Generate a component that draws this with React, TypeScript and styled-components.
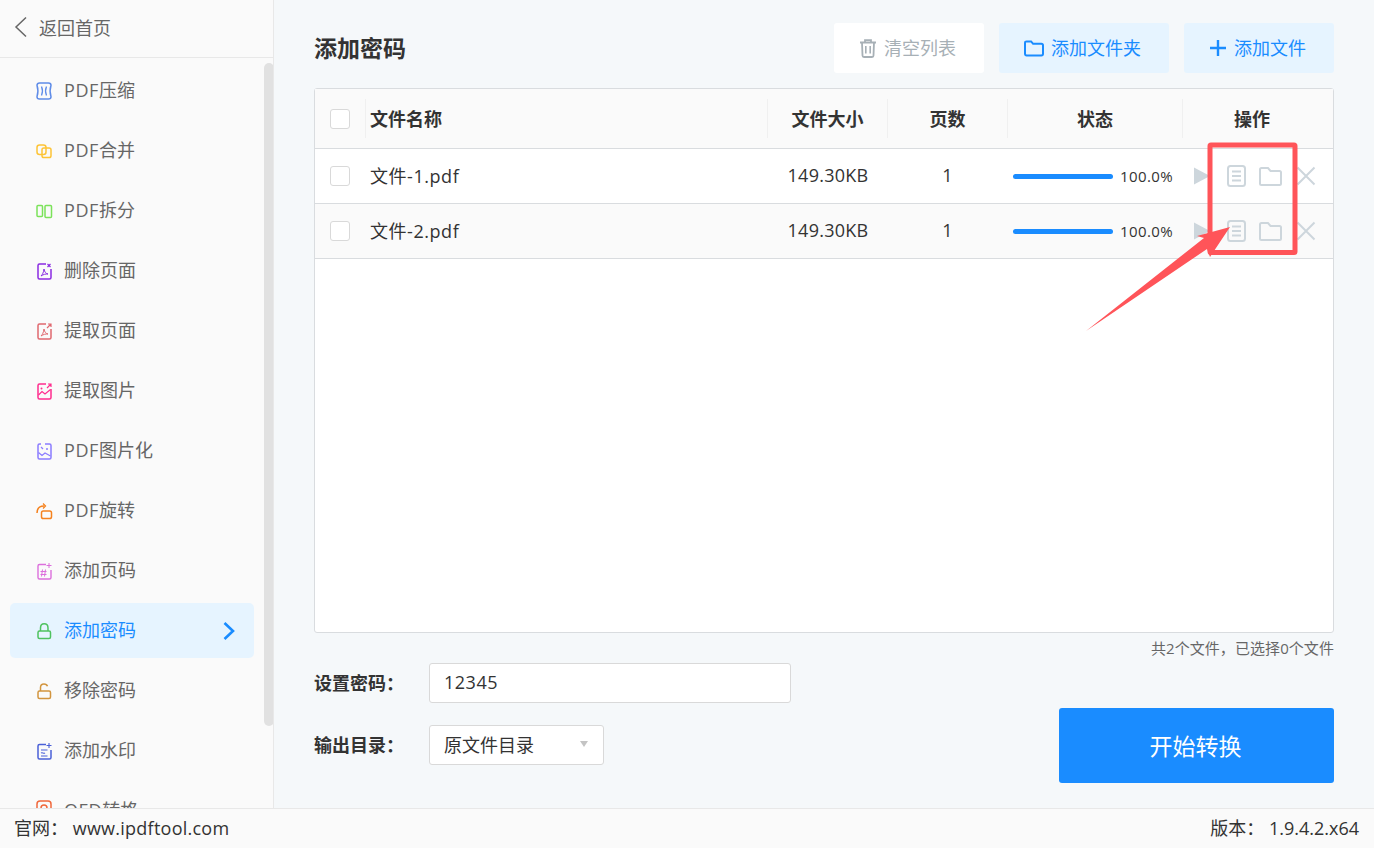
import React from "react";
import styled, { createGlobalStyle } from "styled-components";

const Global = createGlobalStyle`
  html, body { margin: 0; padding: 0; height: 100%; }
  body { font-family: "Open Sans", "Noto Sans CJK SC", sans-serif; color: #333; overflow: hidden; }
  * { box-sizing: border-box; }
`;

const Page = styled.div`
  position: relative;
  width: 1374px;
  height: 848px;
  display: flex;
  flex-direction: column;
  background: #f5f8fa;
  overflow: hidden;
`;
const Body = styled.div`
  flex: 1;
  min-height: 0;
  display: flex;
`;
const Sidebar = styled.aside`
  position: relative;
  width: 274px;
  flex: none;
  display: flex;
  flex-direction: column;
  background: #fafafa;
  border-right: 1px solid #e8e8e8;
  overflow: hidden;
`;
const BackRow = styled.div`
  height: 58px;
  flex: none;
  display: flex;
  align-items: center;
  gap: 12px;
  padding: 0 0 3px 14px;
  border-bottom: 1px solid #e8e8e8;
  color: #666;
  font-size: 18px;
`;
const NavList = styled.nav`
  flex: 1;
  min-height: 0;
  overflow: hidden;
  display: flex;
  flex-direction: column;
  gap: 5px;
  padding: 5px 19px 0 10px;
`;
const NavItem = styled.div<{ $active?: boolean }>`
  height: 55px;
  flex: none;
  display: flex;
  align-items: center;
  gap: 12px;
  padding: 0 18px 0 26px;
  border-radius: 5px;
  font-size: 18px;
  color: ${(p) => (p.$active ? "#1a8cff" : "#666")};
  background: ${(p) => (p.$active ? "#e6f4ff" : "transparent")};
`;
const NavLabel = styled.span`
  flex: 1;
  padding-bottom: 4px;
`;
const LatinPart = styled.span`
  letter-spacing: 0.6px;
`;
const NavIcon = styled.svg`
  width: 16px;
  height: 18px;
  flex: none;
  overflow: visible;
`;
const ScrollThumb = styled.div`
  position: absolute;
  left: 264px;
  top: 63px;
  width: 10px;
  height: 663px;
  border-radius: 5px;
  background: #e1e1e1;
`;
const Main = styled.main`
  flex: 1;
  min-width: 0;
  display: flex;
  flex-direction: column;
  padding: 23px 40px 25px;
`;
const TopBar = styled.div`
  height: 50px;
  flex: none;
  display: flex;
  align-items: center;
  gap: 15px;
  margin-bottom: 15px;
`;
const Title = styled.h1`
  flex: 1;
  margin: 0;
  padding-bottom: 2px;
  font-size: 23px;
  font-weight: 700;
  color: #333;
`;
const ToolButton = styled.button<{ $w: number; $muted?: boolean }>`
  width: ${(p) => p.$w}px;
  height: 50px;
  display: flex;
  align-items: center;
  justify-content: center;
  gap: 7px;
  padding: 0 3px 0 0;
  border: 0;
  border-radius: 3px;
  font: inherit;
  font-size: 18px;
  background: ${(p) => (p.$muted ? "#fff" : "#e6f4ff")};
  color: ${(p) => (p.$muted ? "#a7b0b6" : "#1a8cff")};
`;
const ButtonText = styled.span`
  padding-bottom: 2px;
`;
const Table = styled.div`
  flex: 1;
  min-height: 0;
  background: #fff;
  border: 1px solid #d9dcdf;
  border-radius: 3px;
`;
const cols = "50px 402px 120px 120px 175px 1fr";
const HeadRow = styled.div`
  height: 60px;
  display: grid;
  grid-template-columns: ${cols};
  background: #fafafa;
  border-bottom: 1px solid #d9dcdf;
  font-size: 18px;
  font-weight: 700;
  color: #333;
`;
const HeadCell = styled.div<{ $left?: boolean; $sep?: boolean; $endGap?: number }>`
  display: flex;
  align-items: center;
  justify-content: ${(p) => (p.$left ? "flex-start" : "center")};
  padding: 0 ${(p) => p.$endGap ?? 0}px 2px ${(p) => (p.$left ? "4px" : "0")};
  border-left: ${(p) => (p.$sep ? "1px solid #f0f0f0" : "0")};
  margin: 10px 0;
`;
const CheckCell = styled.div`
  display: flex;
  align-items: center;
  justify-content: center;
`;
const Row = styled.div<{ $alt?: boolean }>`
  height: 55px;
  display: grid;
  grid-template-columns: ${cols};
  background: ${(p) => (p.$alt ? "#fafafa" : "#fff")};
  border-bottom: 1px solid #d9dcdf;
  font-size: 18px;
  color: #333;
`;
const Cell = styled.div<{ $left?: boolean; $track?: number; $inset?: number }>`
  display: flex;
  align-items: center;
  justify-content: ${(p) => (p.$left ? "flex-start" : "center")};
  padding: 0 0 2px ${(p) => (p.$left ? 5 : p.$inset ?? 0)}px;
  letter-spacing: ${(p) => p.$track ?? 0}px;
`;
const Check = styled.span`
  width: 20px;
  height: 20px;
  background: #fff;
  border: 1px solid #d9d9d9;
  border-radius: 3px;
`;
const StatusCell = styled.div`
  display: flex;
  align-items: center;
  gap: 7px;
  padding-left: 6px;
  font-size: 15px;
  letter-spacing: 0.4px;
  white-space: nowrap;
`;
const Bar = styled.span`
  width: 100px;
  height: 5px;
  border-radius: 3px;
  background: #1a8cff;
`;
const Ops = styled.div`
  display: grid;
  grid-template-columns: repeat(4, 34.5px);
  align-items: center;
  justify-items: center;
  padding-left: 3px;
`;
const OpIcon = styled.svg`
  display: block;
  height: 22px;
  width: 24px;
`;
const Note = styled.div`
  height: 30px;
  flex: none;
  display: flex;
  align-items: center;
  justify-content: flex-end;
  padding-bottom: 2px;
  font-size: 15px;
  letter-spacing: 0.07px;
  color: #666;
`;
const Bottom = styled.div`
  height: 120px;
  flex: none;
  display: flex;
  justify-content: space-between;
  align-items: flex-end;
`;
const Form = styled.div`
  align-self: flex-start;
  display: flex;
  flex-direction: column;
  gap: 22px;
`;
const Field = styled.div`
  display: flex;
  align-items: center;
  height: 40px;
`;
const Label = styled.label`
  width: 115px;
  padding-bottom: 2px;
  font-size: 18px;
  font-weight: 700;
  color: #333;
`;
const TextBox = styled.div`
  width: 362px;
  height: 40px;
  display: flex;
  align-items: center;
  padding: 0 0 2px 14px;
  background: #fff;
  border: 1px solid #d9d9d9;
  border-radius: 3px;
  font-size: 18px;
  letter-spacing: 0.5px;
  color: #333;
`;
const SelectBox = styled(TextBox)`
  width: 175px;
  justify-content: space-between;
  padding: 0 15px 2px 14px;
  letter-spacing: 0;
`;
const Caret = styled.span`
  width: 0;
  height: 0;
  border-left: 4.5px solid transparent;
  border-right: 4.5px solid transparent;
  border-top: 6px solid #c4c4c4;
`;
const StartButton = styled.button`
  width: 275px;
  height: 75px;
  padding: 0 2px 2px 0;
  border: 0;
  border-radius: 3px;
  background: #1a8cff;
  color: #fff;
  font: inherit;
  font-size: 23px;
`;
const Footer = styled.footer`
  height: 40px;
  flex: none;
  display: flex;
  justify-content: space-between;
  align-items: center;
  padding: 0 15px 3px 14px;
  background: #fafafa;
  border-top: 1px solid #e8e8e8;
  font-size: 18px;
  color: #333;
`;
const Url = styled.span`
  letter-spacing: 0.25px;
`;
const Overlay = styled.svg`
  position: absolute;
  left: 0;
  top: 0;
  width: 1374px;
  height: 848px;
  pointer-events: none;
`;

const pdfMark = (c: string) => (
  <path d="M5 14c1.5-1.5 2.5-3.5 3-7 .4 3 2 4.6 4 5-2.400-.2-4.600.4-7 2z" fill="none" stroke={c} strokeWidth="1" />
);

type Nav = { label: string; color: string; draw: (c: string) => React.ReactNode };
const navItems: Nav[] = [
  {
    label: "PDF压缩",
    color: "#5f8ce8",
    draw: (c) => (
      <>
        <path d="M3.500 1h9c1.500 0 2.500.8 2.500 2.300-1.200 3.700-1.200 7.700 0 11.400 0 1.500-1 2.300-2.500 2.300h-9C2 17 1 16.200 1 14.700c1.200-3.700 1.200-7.700 0-11.400C1 1.800 2 1 3.500 1z" fill="none" stroke={c} strokeWidth="1.500" />
        <path d="M5.500 4.500c1.300 3 1.300 6 0 9M10.500 4.500c-1.300 3-1.300 6 0 9" fill="none" stroke={c} strokeWidth="1.300" />
      </>
    ),
  },
  {
    label: "PDF合并",
    color: "#fdc437",
    draw: (c) => (
      <>
        <rect x="1" y="3" width="9" height="9.500" rx="2.500" fill="none" stroke={c} strokeWidth="1.500" />
        <rect x="6" y="6" width="9" height="9.500" rx="1.800" fill="none" stroke={c} strokeWidth="1.500" />
      </>
    ),
  },
  {
    label: "PDF拆分",
    color: "#7be25a",
    draw: (c) => (
      <>
        <rect x="1" y="3.500" width="5.500" height="11" rx="1" fill="none" stroke={c} strokeWidth="1.500" />
        <rect x="9" y="3.500" width="6.500" height="12" rx="1" fill="none" stroke={c} strokeWidth="1.500" />
      </>
    ),
  },
  {
    label: "删除页面",
    color: "#8a2be2",
    draw: (c) => (
      <>
        <path d="M10 2H3.500C2.500 2 2 2.500 2 3.500v12c0 1 .5 1.500 1.500 1.500h10c1 0 1.500-.5 1.500-1.500V7" fill="none" stroke={c} strokeWidth="1.500" />
        <path d="M11.500 2l3 3M14.500 2l-3 3" stroke={c} strokeWidth="1.200" />
        {pdfMark(c)}
      </>
    ),
  },
  {
    label: "提取页面",
    color: "#e0686f",
    draw: (c) => (
      <>
        <path d="M10 2H3.500C2.500 2 2 2.500 2 3.500v12c0 1 .5 1.500 1.500 1.500h10c1 0 1.500-.5 1.500-1.500V7" fill="none" stroke={c} strokeWidth="1.500" />
        <path d="M11 6l3.500-3.500M12 2h3v3" fill="none" stroke={c} strokeWidth="1.200" />
        {pdfMark(c)}
      </>
    ),
  },
  {
    label: "提取图片",
    color: "#ff2d8e",
    draw: (c) => (
      <>
        <path d="M10 2H3.500C2.500 2 2 2.500 2 3.500v12c0 1 .5 1.500 1.500 1.500h10c1 0 1.500-.5 1.500-1.500V7" fill="none" stroke={c} strokeWidth="1.500" />
        <path d="M11 6l3.500-3.500M12 2h3v3M2.500 13l3.500-3.500 3 2.500 5.500-4.500" fill="none" stroke={c} strokeWidth="1.200" />
        <circle cx="5.500" cy="6.500" r="1" fill={c} />
      </>
    ),
  },
  {
    label: "PDF图片化",
    color: "#8b7cff",
    draw: (c) => (
      <>
        <path d="M5 2H3.500C2.500 2 2 2.500 2 3.500v12c0 1 .5 1.500 1.500 1.500h10c1 0 1.500-.5 1.500-1.500v-12c0-1-.5-1.500-1.500-1.500H9" fill="none" stroke={c} strokeWidth="1.500" />
        <path d="M2.500 10.500l3.500 3 3-2.500 5.500 3" fill="none" stroke={c} strokeWidth="1.200" />
        <circle cx="11" cy="7" r="1" fill={c} />
        <path d="M5 5l2 2" stroke={c} strokeWidth="1.200" />
      </>
    ),
  },
  {
    label: "PDF旋转",
    color: "#f5821f",
    draw: (c) => (
      <>
        <rect x="5.500" y="9" width="10" height="7.500" rx="1.800" fill="none" stroke={c} strokeWidth="1.500" />
        <path d="M1 11c0-4.500 2.500-7 7-7" fill="none" stroke={c} strokeWidth="1.500" />
        <path d="M7 1.500l2.500 2.500-2.500 2.500" fill="none" stroke={c} strokeWidth="1.300" />
      </>
    ),
  },
  {
    label: "添加页码",
    color: "#dc6fdc",
    draw: (c) => (
      <>
        <path d="M10 2.500H3.500C2.500 2.500 2 3 2 4v11.500c0 1 .5 1.500 1.500 1.500h10c1 0 1.500-.5 1.500-1.500V8" fill="none" stroke={c} strokeWidth="1.400" />
        <path d="M13 1v5M10.500 3.500h5M6.500 7.500l-1 7M9.500 7.500l-1 7M4.500 9.500h6M4.500 12.500h6" fill="none" stroke={c} strokeWidth="1" />
      </>
    ),
  },
  {
    label: "添加密码",
    color: "#4fc25f",
    draw: (c) => (
      <>
        <rect x="2" y="9" width="12.500" height="7.500" rx="1.500" fill="none" stroke={c} strokeWidth="1.500" />
        <path d="M4.500 9V6C4.500 3.300 6 1.800 8.200 1.800S12 3.300 12 6v3" fill="none" stroke={c} strokeWidth="1.500" />
      </>
    ),
  },
  {
    label: "移除密码",
    color: "#d2953f",
    draw: (c) => (
      <>
        <rect x="2" y="9" width="12.500" height="7.500" rx="1.500" fill="none" stroke={c} strokeWidth="1.500" />
        <path d="M4.500 9V5.500C4.500 3.300 6 2 8 2c1.800 0 3 .8 3.500 2.300" fill="none" stroke={c} strokeWidth="1.500" />
      </>
    ),
  },
  {
    label: "添加水印",
    color: "#4a60d8",
    draw: (c) => (
      <>
        <path d="M10 2.500H3.500C2.500 2.500 2 3 2 4v11.500c0 1 .5 1.500 1.500 1.500h10c1 0 1.500-.5 1.500-1.500V8" fill="none" stroke={c} strokeWidth="1.500" />
        <path d="M13 1v5M10.500 3.500h5M5 8h6.500M5 11c1.500-1 2.500 1 4 0M5 14h6.500" fill="none" stroke={c} strokeWidth="1.100" />
      </>
    ),
  },
  {
    label: "OFD转格",
    color: "#f0683c",
    draw: (c) => (
      <>
        <rect x="1" y="-1" width="14" height="17" rx="3" fill="none" stroke={c} strokeWidth="1.500" />
        <circle cx="8" cy="6" r="3" fill="none" stroke={c} strokeWidth="1.500" />
      </>
    ),
  },
];

const OP = "#cdd6dc";

const PlayIcon = () => (
  <OpIcon viewBox="0 0 24 22">
    <path d="M4 2.500l16 8.500-16 8.500z" fill={OP} />
  </OpIcon>
);
const DocIcon = () => (
  <OpIcon viewBox="0 0 24 22">
    <rect x="3" y="1" width="17" height="20" rx="2.500" fill="none" stroke={OP} strokeWidth="2" />
    <path d="M7 6.500h9M7 11h9M7 15.500h9" stroke={OP} strokeWidth="2" />
  </OpIcon>
);
const FolderIcon = () => (
  <OpIcon viewBox="0 0 24 22">
    <path d="M1 4.500c0-1 .5-1.500 1.500-1.500H9l2.500 3h9c1 0 1.500.5 1.500 1.500v11c0 1-.5 1.500-1.500 1.500h-18c-1 0-1.500-.5-1.500-1.500z" fill="none" stroke={OP} strokeWidth="2" />
  </OpIcon>
);
const CloseIcon = () => (
  <OpIcon viewBox="0 0 24 22">
    <path d="M3.500 2.500l17 17M20.500 2.500l-17 17" fill="none" stroke={OP} strokeWidth="2" />
  </OpIcon>
);

const files = ["文件-1.pdf", "文件-2.pdf"];

const renderLabel = (label: string) => {
  const m = label.match(/^([A-Z]+)(.*)$/);
  if (!m) return label;
  return (
    <>
      <LatinPart>{m[1]}</LatinPart>
      {m[2]}
    </>
  );
};

export default function App() {
  return (
    <Page>
      <Global />
      <Body>
        <Sidebar>
          <BackRow>
            <svg width="13" height="22" viewBox="0 0 13 22">
              <path d="M12 1.500L2 11l10 9.500" fill="none" stroke="#666" strokeWidth="1.500" />
            </svg>
            返回首页
          </BackRow>
          <NavList>
            {navItems.map((n) => {
              const active = n.label === "添加密码";
              return (
                <NavItem key={n.label} $active={active}>
                  <NavIcon viewBox="0 0 16 18">{n.draw(n.color)}</NavIcon>
                  <NavLabel>{renderLabel(n.label)}</NavLabel>
                  {active && (
                    <svg width="14" height="20" viewBox="0 0 14 20">
                      <path d="M2.500 2l8.500 8-8.500 8" fill="none" stroke="#1a8cff" strokeWidth="2.600" />
                    </svg>
                  )}
                </NavItem>
              );
            })}
          </NavList>
          <ScrollThumb />
        </Sidebar>
        <Main>
          <TopBar>
            <Title>添加密码</Title>
            <ToolButton $w={150} $muted>
              <svg width="18" height="19" viewBox="0 0 18 19">
                <path d="M1 3.500h16M6 3V1.200h6V3M3 3.500l.5 13c0 1 .6 1.500 1.500 1.500h8c.9 0 1.500-.5 1.500-1.500l.5-13" fill="none" stroke="#a7b0b6" strokeWidth="1.800" />
                <path d="M6.800 7v7.500M11.200 7v7.500" stroke="#a7b0b6" strokeWidth="1.600" />
              </svg>
              <ButtonText>清空列表</ButtonText>
            </ToolButton>
            <ToolButton $w={170}>
              <svg width="20" height="17" viewBox="0 0 20 17">
                <path d="M1 3c0-1 .6-1.600 1.600-1.600h4.500l2 2.400h8.300c1 0 1.600.6 1.600 1.600v8.400c0 1-.6 1.600-1.600 1.600H2.600C1.600 15.400 1 14.800 1 13.800z" fill="none" stroke="#1a8cff" strokeWidth="2" />
              </svg>
              <ButtonText>添加文件夹</ButtonText>
            </ToolButton>
            <ToolButton $w={150}>
              <svg width="18" height="18" viewBox="0 0 18 18">
                <path d="M9 1v16M1 9h16" stroke="#1a8cff" strokeWidth="2.400" />
              </svg>
              <ButtonText>添加文件</ButtonText>
            </ToolButton>
          </TopBar>
          <Table>
            <HeadRow>
              <CheckCell>
                <Check />
              </CheckCell>
              <HeadCell $left $sep>文件名称</HeadCell>
              <HeadCell $sep>文件大小</HeadCell>
              <HeadCell $sep>页数</HeadCell>
              <HeadCell $sep>状态</HeadCell>
              <HeadCell $sep $endGap={12}>操作</HeadCell>
            </HeadRow>
            {files.map((f, i) => (
              <Row key={f} $alt={i === 1}>
                <CheckCell>
                  <Check />
                </CheckCell>
                <Cell $left $track={0.55}>{f}</Cell>
                <Cell $track={0.25} $inset={2}>149.30KB</Cell>
                <Cell $inset={1}>1</Cell>
                <StatusCell>
                  <Bar />
                  100.0%
                </StatusCell>
                <Ops>
                  <PlayIcon />
                  <DocIcon />
                  <FolderIcon />
                  <CloseIcon />
                </Ops>
              </Row>
            ))}
          </Table>
          <Note>共2个文件，已选择0个文件</Note>
          <Bottom>
            <Form>
              <Field>
                <Label>设置密码：</Label>
                <TextBox>12345</TextBox>
              </Field>
              <Field>
                <Label>输出目录：</Label>
                <SelectBox>
                  原文件目录
                  <Caret />
                </SelectBox>
              </Field>
            </Form>
            <StartButton>开始转换</StartButton>
          </Bottom>
        </Main>
      </Body>
      <Footer>
        <span>
          官网： <Url>www.ipdftool.com</Url>
        </span>
        <span>版本： 1.9.4.2.x64</span>
      </Footer>
      <Overlay viewBox="0 0 1374 848">
        <rect x="1210" y="145" width="85" height="107.500" rx="1" fill="none" stroke="#ff5459" strokeWidth="5" />
        <path d="M1086 331L1204 238 1197 236 1230 227 1210 257 1207 249z" fill="#ff5459" />
      </Overlay>
    </Page>
  );
}
